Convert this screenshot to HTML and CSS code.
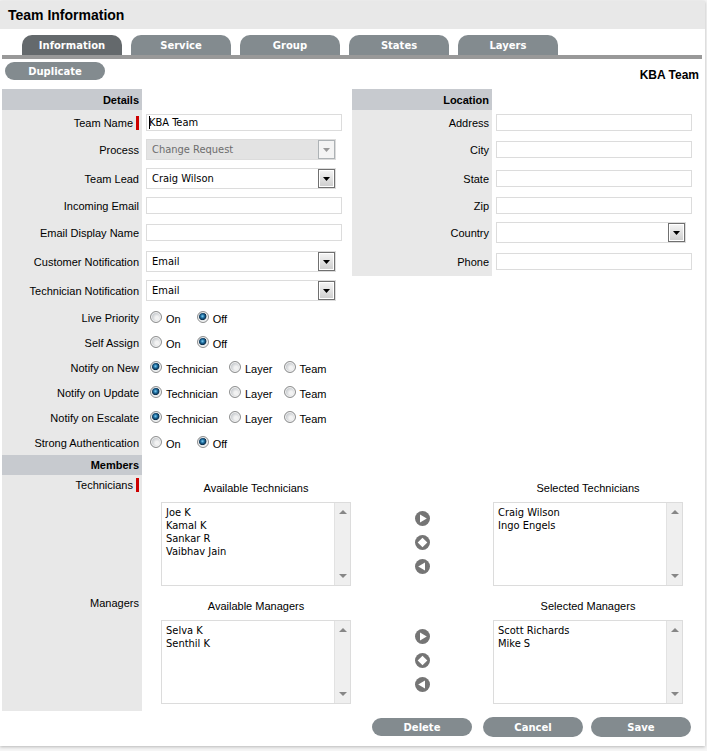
FILE: index.html
```html
<!DOCTYPE html>
<html lang="en">
<head>
    <meta charset="utf-8">
    <title>Team Information</title>
    <link rel="stylesheet" href="styles.css">
</head>
<body>
    <div class="panel">
        <header class="panel-header">
            <h1>Team Information</h1>
        </header>
        <nav class="tabs">
            <button type="button" class="tab active">Information</button>
            <button type="button" class="tab">Service</button>
            <button type="button" class="tab">Group</button>
            <button type="button" class="tab">States</button>
            <button type="button" class="tab">Layers</button>
        </nav>
        <div class="toolbar">
            <button type="button" class="pill">Duplicate</button>
            <h2 class="team-title">KBA Team</h2>
        </div>

        <form>
            <div class="columns">
                <section>
                    <h3 class="section-head">Details</h3>
                    <div class="row">
                        <label class="name" for="team-name"><span class="required">Team Name</span></label>
                        <div class="field"><input type="text" class="text focused" id="team-name" value="KBA Team"></div>
                    </div>
                    <div class="row">
                        <label class="name" for="process">Process</label>
                        <div class="field"><select class="drop" id="process" disabled><option>Change Request</option></select></div>
                    </div>
                    <div class="row tall">
                        <label class="name" for="lead">Team Lead</label>
                        <div class="field"><select class="drop" id="lead"><option>Craig Wilson</option></select></div>
                    </div>
                    <div class="row">
                        <label class="name" for="incoming">Incoming Email</label>
                        <div class="field"><input type="text" class="text" id="incoming"></div>
                    </div>
                    <div class="row">
                        <label class="name" for="display-name">Email Display Name</label>
                        <div class="field"><input type="text" class="text" id="display-name"></div>
                    </div>
                    <div class="row tall">
                        <label class="name" for="customer">Customer Notification</label>
                        <div class="field"><select class="drop" id="customer"><option>Email</option></select></div>
                    </div>
                    <div class="row tall">
                        <label class="name" for="technician">Technician Notification</label>
                        <div class="field"><select class="drop" id="technician"><option>Email</option></select></div>
                    </div>
                    <div class="row choice" role="radiogroup" aria-labelledby="live">
                        <span class="name" id="live">Live Priority</span>
                        <div class="field onoff">
                            <label><input type="radio" name="live">On</label>
                            <label><input type="radio" name="live" checked>Off</label>
                        </div>
                    </div>
                    <div class="row choice" role="radiogroup" aria-labelledby="self">
                        <span class="name" id="self">Self Assign</span>
                        <div class="field onoff">
                            <label><input type="radio" name="self">On</label>
                            <label><input type="radio" name="self" checked>Off</label>
                        </div>
                    </div>
                    <div class="row choice" role="radiogroup" aria-labelledby="new">
                        <span class="name" id="new">Notify on New</span>
                        <div class="field">
                            <label><input type="radio" name="new" checked>Technician</label>
                            <label><input type="radio" name="new">Layer</label>
                            <label><input type="radio" name="new">Team</label>
                        </div>
                    </div>
                    <div class="row choice" role="radiogroup" aria-labelledby="update">
                        <span class="name" id="update">Notify on Update</span>
                        <div class="field">
                            <label><input type="radio" name="update" checked>Technician</label>
                            <label><input type="radio" name="update">Layer</label>
                            <label><input type="radio" name="update">Team</label>
                        </div>
                    </div>
                    <div class="row choice" role="radiogroup" aria-labelledby="escalate">
                        <span class="name" id="escalate">Notify on Escalate</span>
                        <div class="field">
                            <label><input type="radio" name="escalate" checked>Technician</label>
                            <label><input type="radio" name="escalate">Layer</label>
                            <label><input type="radio" name="escalate">Team</label>
                        </div>
                    </div>
                    <div class="row choice" role="radiogroup" aria-labelledby="strong">
                        <span class="name" id="strong">Strong Authentication</span>
                        <div class="field onoff">
                            <label><input type="radio" name="strong">On</label>
                            <label><input type="radio" name="strong" checked>Off</label>
                        </div>
                    </div>
                </section>

                <section>
                    <h3 class="section-head">Location</h3>
                    <div class="row">
                        <label class="name" for="address">Address</label>
                        <div class="field"><input type="text" class="text" id="address"></div>
                    </div>
                    <div class="row">
                        <label class="name" for="city">City</label>
                        <div class="field"><input type="text" class="text" id="city"></div>
                    </div>
                    <div class="row tall">
                        <label class="name" for="state">State</label>
                        <div class="field"><input type="text" class="text" id="state"></div>
                    </div>
                    <div class="row">
                        <label class="name" for="zip">Zip</label>
                        <div class="field"><input type="text" class="text" id="zip"></div>
                    </div>
                    <div class="row">
                        <label class="name" for="country">Country</label>
                        <div class="field"><select class="drop" id="country"><option></option></select></div>
                    </div>
                    <div class="row tall">
                        <label class="name" for="phone">Phone</label>
                        <div class="field"><input type="text" class="text" id="phone"></div>
                    </div>
                </section>
            </div>

            <section>
                <h3 class="section-head members-head">Members</h3>
                <div class="members">
                    <span class="name"><span class="required">Technicians</span></span>
                    <div class="transfer">
                        <div class="list">
                            <label for="avail-tech">Available Technicians</label>
                            <div class="listbox">
                                <select id="avail-tech" multiple>
                                    <option>Joe K</option>
                                    <option>Kamal K</option>
                                    <option>Sankar R</option>
                                    <option>Vaibhav Jain</option>
                                </select>
                                <div class="scrollbar"><i class="up"></i><i class="down"></i></div>
                            </div>
                        </div>
                        <div class="movers">
                            <button type="button" aria-label="Add technician"><svg viewBox="0 0 15 15"><circle cx="7.5" cy="7.5" r="7.5"/><path d="M5 3.5v8l6.800-4z"/></svg></button>
                            <button type="button" aria-label="Swap technicians"><svg viewBox="0 0 15 15"><circle cx="7.5" cy="7.5" r="7.5"/><path d="M7.5 2.700L12.300 7.5 7.5 12.300 2.700 7.5z"/></svg></button>
                            <button type="button" aria-label="Remove technician"><svg viewBox="0 0 15 15"><circle cx="7.5" cy="7.5" r="7.5"/><path d="M10 3.5v8l-6.800-4z"/></svg></button>
                        </div>
                        <div class="list">
                            <label for="sel-tech">Selected Technicians</label>
                            <div class="listbox">
                                <select id="sel-tech" multiple>
                                    <option>Craig Wilson</option>
                                    <option>Ingo Engels</option>
                                </select>
                                <div class="scrollbar"><i class="up"></i><i class="down"></i></div>
                            </div>
                        </div>
                    </div>
                </div>
                <div class="members">
                    <span class="name">Managers</span>
                    <div class="transfer">
                        <div class="list">
                            <label for="avail-man">Available Managers</label>
                            <div class="listbox">
                                <select id="avail-man" multiple>
                                    <option>Selva K</option>
                                    <option>Senthil K</option>
                                </select>
                                <div class="scrollbar"><i class="up"></i><i class="down"></i></div>
                            </div>
                        </div>
                        <div class="movers">
                            <button type="button" aria-label="Add manager"><svg viewBox="0 0 15 15"><circle cx="7.5" cy="7.5" r="7.5"/><path d="M5 3.5v8l6.800-4z"/></svg></button>
                            <button type="button" aria-label="Swap managers"><svg viewBox="0 0 15 15"><circle cx="7.5" cy="7.5" r="7.5"/><path d="M7.5 2.700L12.300 7.5 7.5 12.300 2.700 7.5z"/></svg></button>
                            <button type="button" aria-label="Remove manager"><svg viewBox="0 0 15 15"><circle cx="7.5" cy="7.5" r="7.5"/><path d="M10 3.5v8l-6.800-4z"/></svg></button>
                        </div>
                        <div class="list">
                            <label for="sel-man">Selected Managers</label>
                            <div class="listbox">
                                <select id="sel-man" multiple>
                                    <option>Scott Richards</option>
                                    <option>Mike S</option>
                                </select>
                                <div class="scrollbar"><i class="up"></i><i class="down"></i></div>
                            </div>
                        </div>
                    </div>
                </div>
            </section>

            <div class="actions">
                <button type="button" class="pill delete">Delete</button>
                <button type="button" class="pill large">Cancel</button>
                <button type="submit" class="pill large">Save</button>
            </div>
        </form>
    </div>
</body>
</html>
```
FILE: styles.css
```css
* {
    box-sizing: border-box;
}
body {
    margin: 0;
    padding: 1px 2px 4px 0;
    background-color: #f5f5f5;
    font-family: "Liberation Sans", Arial, sans-serif;
    font-size: 11px;
    line-height: 14px;
    color: #000;
}
h1, h2, h3 {
    margin: 0;
}
button {
    border: none;
    padding: 0;
    cursor: pointer;
}
.panel {
    background-color: #fff;
    padding-bottom: 9px;
    box-shadow: 0 1px 3px rgba(0, 0, 0, 0.25);
}
.panel-header {
    background-color: #e8e8e8;
    height: 28px;
    padding-left: 8px;
}
.panel-header h1 {
    font-size: 14px;
    line-height: 28px;
}

/* tabs and pill buttons */
.tabs {
    display: flex;
    gap: 9px;
    margin: 6px 3px 0 2px;
    padding-left: 20px;
    border-bottom: 4px solid #999;
}
.tab, .pill {
    width: 100px;
    background-color: #838b8f;
    color: #fff;
    font-family: "DejaVu Sans", Verdana, sans-serif;
    font-size: 10px;
    font-weight: bold;
}
.tab {
    height: 20px;
    border-radius: 10px 10px 0 0;
}
.tab.active {
    background-color: #64696c;
}
.pill {
    height: 18px;
    border-radius: 10px;
}
.pill.large {
    height: 20px;
}
.toolbar {
    display: flex;
    justify-content: space-between;
    height: 30px;
    padding: 3px 6px 0 5px;
}
.team-title {
    font-size: 12px;
    line-height: 26px;
}

/* form rows */
.columns {
    display: grid;
    grid-template-columns: 1fr 1fr;
    align-items: start;
    padding: 0 3px 0 2px;
}
.section-head {
    width: 140px;
    height: 21px;
    padding-right: 3px;
    background-color: #c7cacf;
    font-size: 11px;
    line-height: 22px;
    text-align: right;
}
.members-head {
    height: 20px;
    margin-left: 2px;
    line-height: 20px;
}
.row {
    display: flex;
    height: 27px;
}
.name {
    flex: none;
    width: 140px;
    padding: 6px 3px 0 0;
    background-color: #e8e8e8;
    text-align: right;
}
.tall {
    height: 29px;
}
.tall .name {
    padding-top: 8px;
}
.required {
    display: inline-block;
    padding-right: 3px;
    border-right: 3px solid #c00;
}
.field {
    flex: 1;
    display: flex;
    align-items: center;
    padding: 0 10px 2px 4px;
}
.tall .field {
    padding-bottom: 0;
}
.text, .drop, .listbox select {
    margin: 0;
    border: 1px solid #dcdcdc;
    border-radius: 0;
    outline: none;
    background-color: #fff;
    color: #000;
    font-family: Tahoma, "DejaVu Sans Condensed", sans-serif;
    font-size: 11px;
}
.text {
    width: 100%;
    height: 17px;
    padding: 0 2px;
}
.text.focused {
    background: #fff linear-gradient(#000, #000) no-repeat 2px 1px / 1px 13px;
}
.drop {
    appearance: none;
    width: calc(100% - 6px);
    height: 21px;
    padding: 0 20px 0 5px;
    background: #fff url("data:image/svg+xml,%3Csvg xmlns='http://www.w3.org/2000/svg' width='17' height='19'%3E%3Cdefs%3E%3ClinearGradient id='g' x2='0' y2='1'%3E%3Cstop stop-color='%23f3f3f3'/%3E%3Cstop offset='1' stop-color='%23cfcfcf'/%3E%3C/linearGradient%3E%3C/defs%3E%3Crect x='.5' y='.5' width='16' height='18' fill='%23fff' stroke='%23707070'/%3E%3Crect x='2' y='2' width='13' height='15' fill='url(%23g)'/%3E%3Cpath d='M5 8h7l-3.500 4z'/%3E%3C/svg%3E") no-repeat right center;
}
.drop:disabled {
    background: #e3e3e3 url("data:image/svg+xml,%3Csvg xmlns='http://www.w3.org/2000/svg' width='17' height='19'%3E%3Crect x='.5' y='.5' width='16' height='18' fill='%23f4f4f4' stroke='%23adb2b5'/%3E%3Cpath d='M5 8h7l-3.500 4z' fill='%23999'/%3E%3C/svg%3E") no-repeat right center;
    color: #6d6d6d;
    opacity: 1;
}

/* radio rows */
.choice {
    height: 25px;
}
.choice .field {
    gap: 11px;
    padding: 0 0 0 8px;
}
.choice .onoff {
    gap: 16px;
}
.choice label {
    display: flex;
    gap: 4px;
    line-height: 16px;
    padding-top: 3px;
}
.choice input {
    appearance: none;
    width: 12px;
    height: 12px;
    margin: 0;
    border: 1px solid #8e8f8f;
    border-radius: 50%;
    background: radial-gradient(circle at 60% 60%, #f2f2f2 20%, #c4c8cc 65%);
    box-shadow: inset 0 0 0 1px #f4f4f4;
}
.choice input:checked {
    background: radial-gradient(circle at 45% 42%, #7fd0f5 0, #1c6a9c 24%, #0d2e4a 44%, #e4e8ea 54%);
}

/* member lists */
.members {
    display: flex;
    height: 118px;
    padding: 0 3px 0 2px;
}
.members .name {
    padding-top: 3px;
}
.transfer {
    flex: 1;
    display: flex;
    padding: 0 19px;
}
.list {
    flex: 1;
    padding-top: 6px;
    text-align: center;
}
.list > label {
    display: block;
}
.listbox {
    display: flex;
    height: 84px;
    margin-top: 7px;
    border: 1px solid #dcdcdc;
}
.listbox select {
    flex: 1;
    min-width: 0;
    padding: 3px 0 0 4px;
    border: none;
    overflow: hidden;
}
.listbox option {
    min-height: 13px;
    padding: 0;
    line-height: 13px;
}
.scrollbar {
    display: flex;
    flex-direction: column;
    justify-content: space-between;
    align-items: center;
    width: 16px;
    padding: 7px 0;
    background-color: #efefef;
    border-left: 1px solid #e2e2e2;
}
.up, .down {
    border: 4px solid transparent;
    border-top: none;
    border-bottom: 4px solid #868686;
}
.down {
    border-top: 4px solid #868686;
    border-bottom: none;
}
.movers {
    display: flex;
    flex-direction: column;
    align-items: center;
    gap: 9px;
    width: 142px;
    padding-top: 36px;
}
.movers button {
    width: 15px;
    height: 15px;
    background: none;
}
.movers svg {
    display: block;
    fill: #757575;
}
.movers path {
    fill: #fff;
}

.actions {
    display: flex;
    justify-content: flex-end;
    align-items: center;
    gap: 8px;
    padding: 6px 14px 0 0;
}
.delete {
    margin-right: 3px;
}
```
